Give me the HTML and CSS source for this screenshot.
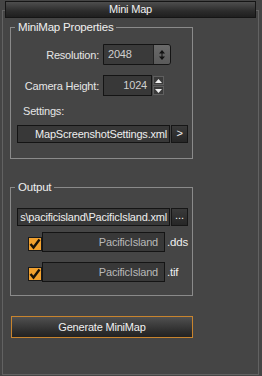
FILE: index.html
```html
<!DOCTYPE html>
<html>
<head>
<meta charset="utf-8">
<link rel="stylesheet" href="styles.css">
</head>
<body>
<div class="rollout">
  <div class="titlebar">Mini Map</div>

  <div class="group g1">
    <span class="legend">MiniMap Properties</span>
    <div class="row r-res">
      <span class="lbl">Resolution:</span>
      <div class="combo">
        <span class="combo-val">2048</span>
        <span class="combo-spin">
          <svg width="8" height="12" viewBox="0 0 8 12"><path d="M4 1 L7 4.5 H1 Z M4 11 L7 7.5 H1 Z" fill="#111"/><rect x="3.5" y="4" width="1" height="4" fill="#111"/></svg>
        </span>
      </div>
    </div>
    <div class="row r-cam">
      <span class="lbl">Camera Height:</span>
      <div class="field num">1024</div>
      <div class="spinner">
        <span class="sp-btn"><svg width="7" height="4" viewBox="0 0 7 4"><path d="M3.5 0 L7 4 H0 Z" fill="#eee"/></svg></span>
        <span class="sp-btn"><svg width="7" height="4" viewBox="0 0 7 4"><path d="M0 0 H7 L3.5 4 Z" fill="#eee"/></svg></span>
      </div>
    </div>
    <div class="lbl-settings">Settings:</div>
    <div class="pathrow">
      <div class="field path"><span>MapScreenshotSettings.xml</span></div>
      <div class="sbtn">&gt;</div>
    </div>
  </div>

  <div class="group g2">
    <span class="legend">Output</span>
    <div class="pathrow first">
      <div class="field path"><span>s\pacificisland\PacificIsland.xml</span></div>
      <div class="sbtn dots">...</div>
    </div>
    <div class="chkrow dds">
      <span class="chk"><svg width="12" height="12" viewBox="0 0 12 12"><path d="M1.5 6 L4.5 9.5 L10.5 1.5" fill="none" stroke="#1a1208" stroke-width="2.4"/></svg></span>
      <div class="field name">PacificIsland</div>
      <span class="ext">.dds</span>
    </div>
    <div class="chkrow tif">
      <span class="chk"><svg width="12" height="12" viewBox="0 0 12 12"><path d="M1.5 6 L4.5 9.5 L10.5 1.5" fill="none" stroke="#1a1208" stroke-width="2.4"/></svg></span>
      <div class="field name">PacificIsland</div>
      <span class="ext">.tif</span>
    </div>
  </div>

  <div class="genbtn">Generate MiniMap</div>
</div>
</body>
</html>
```

FILE: styles.css
```css
* { box-sizing: border-box; }
html, body {
  margin: 0;
  padding: 0;
  background: #454545;
  width: 262px;
  height: 376px;
  overflow: hidden;
}
body {
  font-family: "Liberation Sans", Arial, sans-serif;
  font-size: 11px;
  letter-spacing: -0.2px;
  color: #e6e6e6;
}
.rollout {
  margin: 10px 3px 0 2px;
  height: 365px;
  border: 1px solid #626262;
}
.titlebar {
  margin: -10px 2px 0 2px;
  height: 17px;
  border: 1px solid #151515;
  background: linear-gradient(#4e4e4e, #2c2c2c 60%, #1f1f1f);
  color: #f2f2f2;
  text-align: center;
  line-height: 15px;
}
.group {
  position: relative;
  margin-left: 7px;
  width: 183px;
  border: 1px solid #8a8a8a;
}
.g1 { margin-top: 9px; padding-bottom: 15px; }
.g2 { margin-top: 28px; padding-bottom: 13px; }
.legend {
  position: absolute;
  top: -8px;
  left: 4px;
  padding: 0 3px;
  background: #454545;
  line-height: 14px;
  font-size: 11.5px;
  color: #f0f0f0;
}
.row {
  display: flex;
  align-items: center;
  height: 21px;
}
.r-res { margin-top: 16px; }
.r-cam { margin-top: 10px; }
.lbl {
  width: 88px;
  margin-right: 4px;
  text-align: right;
}
.combo {
  display: flex;
  width: 68px;
  height: 21px;
  border: 1px solid #141414;
  background: #3a3a3a;
  border-radius: 0 3px 3px 0;
}
.combo-val {
  flex: 1;
  padding-left: 4px;
  line-height: 19px;
  color: #cfcfcf;
}
.combo-spin {
  width: 17px;
  display: flex;
  align-items: center;
  justify-content: center;
  background: linear-gradient(#6a6a6a, #5a5a5a);
  border-left: 1px solid #222;
  border-radius: 0 2px 2px 0;
}
.field {
  background: #383838;
  border: 1px solid #141414;
  color: #cfcfcf;
  white-space: nowrap;
  overflow: hidden;
}
.num {
  width: 49px;
  height: 21px;
  text-align: right;
  padding-right: 4px;
  line-height: 19px;
}
.spinner {
  margin-left: 1px;
  display: flex;
  flex-direction: column;
  gap: 1px;
}
.sp-btn {
  width: 11px;
  height: 9px;
  border: 1px solid #5f5f5f;
  background: #3a3a3a;
  display: flex;
  align-items: center;
  justify-content: center;
}
.lbl-settings {
  margin-top: 8px;
  padding-left: 12px;
  line-height: 14px;
}
.pathrow {
  display: flex;
  gap: 1px;
  margin-left: 6px;
  margin-top: 7px;
  height: 18px;
}
.pathrow.first { margin-top: 20px; }
.path {
  width: 153px;
  height: 18px;
  display: flex;
  justify-content: flex-end;
  padding-right: 2px;
  line-height: 16px;
  color: #eeeeee;
}
.path span { flex: none; }
.sbtn {
  width: 17px;
  height: 18px;
  border: 1px solid #161616;
  background: linear-gradient(#3a3a3a, #262626);
  color: #f0f0f0;
  text-align: center;
  line-height: 15px;
}
.dots { line-height: 13px; letter-spacing: 0; }
.chkrow {
  display: flex;
  align-items: center;
  height: 20px;
  margin-left: 17px;
}
.dds { margin-top: 6px; }
.tif { margin-top: 10px; }
.chk {
  width: 14px;
  height: 14px;
  border: 1px solid #1a1a1a;
  background: #f2a12e;
  display: flex;
  align-items: center;
  justify-content: center;
  margin-top: 3px;
}
.name {
  width: 123px;
  height: 20px;
  text-align: right;
  padding-right: 6px;
  line-height: 18px;
  color: #b8b8b8;
}
.ext {
  margin-left: 2px;
  color: #eeeeee;
  font-size: 11.5px;
}
.genbtn {
  margin-top: 20px;
  margin-left: 8px;
  width: 182px;
  height: 22px;
  border: 1px solid #c8842e;
  background: linear-gradient(#505050, #2e2e2e 70%, #222);
  color: #f0f0f0;
  text-align: center;
  line-height: 20px;
}
```
